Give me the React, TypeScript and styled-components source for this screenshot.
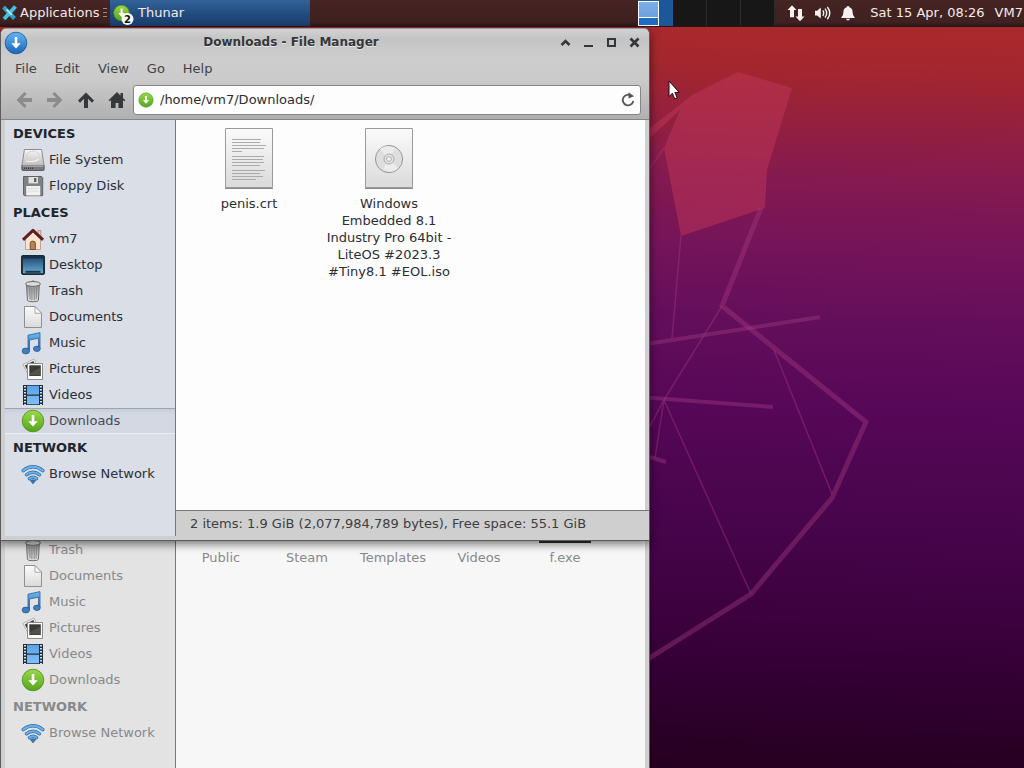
import React from "react";
import styled, { createGlobalStyle, css } from "styled-components";

const GlobalStyle = createGlobalStyle`
  *, *::before, *::after { box-sizing: border-box; }
  body {
    margin: 0;
    font-family: "DejaVu Sans", "Noto Sans", sans-serif;
    font-size: 13px;
    line-height: 17px;
    color: #2b2e33;
  }
  button, input {
    font: inherit;
    color: inherit;
    background: none;
    border: 0;
    padding: 0;
    margin: 0;
    outline: none;
  }
`;

const Screen = styled.div`
  position: relative;
  display: flex;
  flex-direction: column;
  min-height: 100vh;
  overflow: hidden;
  background: #300030;
`;

/* ---------- top panel ---------- */

const Panel = styled.header`
  position: relative;
  display: flex;
  align-items: stretch;
  height: 27px;
  background: linear-gradient(#452423, #3f2120 85%, #2c1a1a);
  color: #f3ecea;
  border-bottom: 1px solid #2a1616;
  white-space: nowrap;
`;

const AppMenu = styled.button`
  display: flex;
  align-items: center;
  gap: 3px;
  width: 103px;
  padding: 0 0 2px 2px;
`;

const Handle = styled.span`
  width: 4px;
  height: 10px;
  margin: 8px 3px 0 0;
  background: repeating-linear-gradient(#9a8a88 0 1px, transparent 1px 4px);
`;

const Task = styled.button`
  display: flex;
  align-items: center;
  gap: 3px;
  flex: 0 1 200px;
  padding: 0 0 2px 2px;
  background: linear-gradient(#336299, #20497b 60%, #1a3f6d);
`;

const Spacer = styled.div`
  flex: 1;
`;

const Pager = styled.div`
  display: flex;
  flex: none;
  width: 137px;
`;

const Workspace = styled.button<{ $active?: boolean }>`
  flex: 1;
  display: flex;
  background: ${(p) => (p.$active ? "#1c5799" : "#161716")};
  border-right: 1px solid ${(p) => (p.$active ? "#1c5799" : "#2a2a2a")};
`;

const MiniWindows = styled.span`
  width: 21px;
  height: 25px;
  margin-top: 1px;
  border: 1px solid #fff;
  background: linear-gradient(#7fb0e6, #6ba1dd 15px, #fff 15px, #fff 16px, #1f6dc2 16px);
`;

const Tray = styled.div`
  display: flex;
  align-items: center;
  gap: 8px;
  padding: 0 14px 0 11px;
  svg { display: block; }
`;

const PanelText = styled.span`
  align-self: center;
  padding: 0 10px 2px 0;
`;

const UserText = styled(PanelText)`
  padding-right: 1px;
`;

/* ---------- desktop and windows ---------- */

const Desktop = styled.main`
  position: relative;
  flex: 1;
`;

const Wallpaper = styled.svg`
  position: absolute;
  inset: 0;
  width: 100%;
  height: 100%;
`;

const Pointer = styled.svg`
  position: absolute;
  left: 668px;
  top: 80px;
`;

const windowFrame = css`
  position: absolute;
  left: 0;
  display: flex;
  flex-direction: column;
  width: 650px;
  max-width: 100%;
  background: #cfcfcf;
  border: 1px solid #5c5c5e;
  border-top-color: #9b9b9b;
`;

const Window = styled.section`
  ${windowFrame}
  top: 1px;
  border-radius: 6px 6px 0 0;
  padding-bottom: 4px;
  box-shadow: 0 3px 10px rgba(0, 0, 0, 0.55);
`;

const BackWindow = styled.section`
  ${windowFrame}
  top: 509px;
  bottom: 0;
  border-bottom: 0;
  box-shadow: 0 0 4px rgba(0, 0, 0, 0.5);
`;

const Chrome = styled.div`
  background: linear-gradient(#d3d3d3, #c4c4c4 10px, #cdcdcd 30px, #cbcbcb 50px, #b0b0b0);
  border-bottom: 1px solid #858585;
  border-radius: 5px 5px 0 0;
`;

const TitleBar = styled.div`
  display: flex;
  align-items: center;
  height: 27px;
  padding: 0 3px;
`;

const Title = styled.h1`
  flex: 1;
  margin: 0;
  font-size: 12px;
  line-height: 17px;
  font-weight: bold;
  text-align: center;
  color: #33363a;
  text-shadow: 0 1px 0 #e6e6e6;
`;

const FrameButton = styled.button`
  display: flex;
  align-items: center;
  justify-content: center;
  width: 23px;
  height: 23px;
`;

const MenuBar = styled.nav`
  display: flex;
  align-items: center;
  height: 25px;
  padding-left: 4px;
`;

const MenuItem = styled.button`
  padding: 0 8px 1px 10px;
  color: #404347;
`;

const ToolBar = styled.div`
  display: flex;
  align-items: center;
  height: 38px;
  padding: 0 8px 0 7px;
`;

const ToolButton = styled.button`
  display: flex;
  align-items: center;
  justify-content: center;
  flex: none;
  width: 31px;
  height: 30px;
`;

const PathEntry = styled.label`
  display: flex;
  align-items: center;
  flex: 1;
  gap: 6px;
  height: 30px;
  margin-left: 1px;
  padding: 0 3px 0 4px;
  background: #fdfdfd;
  border: 1px solid #858585;
  border-radius: 3px;
  input { flex: 1; min-width: 0; height: 20px; padding-bottom: 2px; }
  button { display: flex; }
`;

const Body = styled.div`
  display: flex;
  flex: 1;
  margin: 0 4px;
`;

const SideBar = styled.aside<{ $dim?: boolean }>`
  flex: none;
  width: 171px;
  background: ${(p) => (p.$dim ? "#e3e3e3" : "#dadee6")};
  color: ${(p) => (p.$dim ? "#88898b" : "#2b2f38")};
  border-right: 1px solid #77777a;
`;

const SideHeading = styled.h2<{ $dim?: boolean }>`
  margin: 0;
  padding: 5px 0 5px 8px;
  font-size: 13px;
  line-height: 17px;
  font-weight: bold;
  color: ${(p) => (p.$dim ? "#88898b" : "#20242b")};
`;

const Place = styled.button<{ $selected?: boolean }>`
  display: flex;
  align-items: center;
  gap: 4px;
  width: 100%;
  height: 26px;
  padding-left: 16px;
  text-align: left;
  span { padding-bottom: 2px; }
  ${(p) =>
    p.$selected &&
    css`
      color: #454a57;
      background: linear-gradient(#c6ccd8, #d3d8e2 6px, #d3d8e2);
      box-shadow: inset 0 1px 0 #9fa5b0, inset 0 -1px 0 #eceff4;
    `}
`;

const Pane = styled.div`
  display: flex;
  flex-direction: column;
  flex: 1;
  min-width: 0;
`;

const Files = styled.div`
  display: flex;
  align-items: flex-start;
  min-height: 390px;
  padding: 8px 3px;
  background: #fdfdfd;
`;

const FileItem = styled.button`
  display: flex;
  flex-direction: column;
  align-items: center;
  gap: 6px;
  width: 140px;
  padding: 0 6px;
  svg { display: block; }
`;

const Status = styled.div`
  padding: 4px 0 4px 14px;
  border-top: 1px solid #77777a;
  color: #3b3e42;
  margin-right: -4px;
`;

const BackFiles = styled.div`
  display: flex;
  align-items: flex-start;
  flex: 1;
  padding-left: 2px;
  background: #f7f7f7;
  color: #88898b;
`;

const BackFile = styled.button<{ $icon?: boolean }>`
  width: 86px;
  &::before {
    content: "";
    display: block;
    width: 52px;
    height: 6px;
    margin: 0 auto 6px;
    background: ${(p) => (p.$icon ? "#2e2e30" : "transparent")};
  }
`;

/* ---------- icons ---------- */

const Gradients = styled.svg`
  position: absolute;
  width: 0;
  height: 0;
`;

const stops: Record<string, [string, string]> = {
  green: ["#9bd84a", "#55a51d"],
  blue: ["#64b5f3", "#1c66b8"],
  metal: ["#f7f7f7", "#bdbdbd"],
  paper: ["#fbfbfb", "#dadada"],
  screen: ["#1d4c73", "#6ba9cf"],
  can: ["#8d8d8d", "#e9e9e9"],
  sky: ["#6fb6ee", "#2a6db0"],
  film: ["#5aa2e4", "#7fc0f5"],
};

function SharedGradients() {
  return (
    <Gradients aria-hidden="true">
      <defs>
        {Object.entries(stops).map(([id, [a, b]]) => (
          <linearGradient key={id} id={id} x1="0" y1="0" x2="0" y2="1">
            <stop offset="0" stopColor={a} />
            <stop offset="1" stopColor={b} />
          </linearGradient>
        ))}
      </defs>
    </Gradients>
  );
}

function DownloadDisc({ size, color = "green" }: { size: number; color?: "green" | "blue" }) {
  const edge = color === "green" ? "#4b8f1e" : "#1b5596";
  return (
    <svg width={size} height={size} viewBox="0 0 24 24" aria-hidden="true">
      <circle cx="12" cy="12" r="10.8" fill={`url(#${color})`} stroke={edge} strokeWidth="0.8" />
      <path d="M10.7 6h2.6v6.2h3.4L12 17.6 7.3 12.2h3.4z" fill="#fff" />
    </svg>
  );
}

const drawings: Record<string, React.ReactNode> = {
  drive: (
    <>
      <path d="M3.4 1.5h17.2l2.4 16H1z" fill="url(#metal)" stroke="#8d8d8d" />
      <ellipse cx="12" cy="8.5" rx="6.5" ry="5.5" fill="none" stroke="#d2d2d2" />
      <path d="M5 13c3 1 9 1 13-2" fill="none" stroke="#fff" />
      <path d="M.8 17.5h22.4v3.7q0 1.3-1.3 1.3H2.1q-1.3 0-1.3-1.3z" fill="#77797a" stroke="#4c4c4c" strokeWidth=".8" />
      <path d="M3 20.2h9" stroke="#3a3a3a" strokeWidth="1.6" strokeDasharray="1 1" />
      <path d="M1.5 18h21" stroke="#c9c9c9" />
    </>
  ),
  floppy: (
    <>
      <path d="M2.500 2.500h18.200l1 1v18.200H3.400l-.9-1z" fill="#7e8285" stroke="#5f6366" />
      <path d="M7.500 3h9.500v6.400H7.500z" fill="#e1e2e2" />
      <path d="M13 4h2.400v4H13z" fill="#5f6366" />
      <path d="M5.200 12h14v9.500h-14z" fill="#f1f1f1" />
      <path d="M7 14.500h10.500M7 17h10.500" stroke="#dcdcdc" />
    </>
  ),
  home: (
    <>
      <path d="M17 3.5h2.8V10L17 7z" fill="#f3d3bd" stroke="#9b7a68" strokeWidth=".7" />
      <path d="M4.5 11.5 12 4.7l7.5 6.8v11h-15z" fill="#fbe3d2" stroke="#b9927c" strokeWidth=".8" />
      <path d="M9.2 22.5v-6.2q0-2.200 2.600-2.200t2.600 2.200v6.200z" fill="#b9824e" stroke="#6d4a2b" strokeWidth=".9" />
      <path d="M2 12.800 12 3.400 22 12.800" fill="none" stroke="#5c2020" strokeWidth="3" strokeLinejoin="round" />
    </>
  ),
  desktop: (
    <>
      <rect x=".6" y="2.6" width="22.8" height="18.8" rx="1" fill="#26333d" stroke="#10202b" />
      <rect x="2" y="4.2" width="20" height="16" fill="url(#screen)" />
      <path d="M4.500 17.800h15v2h-15z" fill="#173a53" />
      <path d="M2 4.600h20" stroke="#123049" strokeWidth="1.400" />
    </>
  ),
  trash: (
    <>
      <path d="M5.5 6h12.800l-.9 15.300q-.2 1.400-5.500 1.400t-5.500-1.400z" fill="url(#can)" stroke="#6e6e6e" />
      <path d="M8.600 8.500l.4 12M10.900 8.500v12.800M13.200 8.500v12.800M15.500 8.500l-.4 12" stroke="#858585" strokeWidth="1" />
      <ellipse cx="12" cy="4.900" rx="7.400" ry="2.400" fill="#dcdcdc" stroke="#6e6e6e" />
      <path d="M9.800 3q2.200-2.400 4.400 0" fill="none" stroke="#6e6e6e" />
    </>
  ),
  document: (
    <>
      <path d="M3.5 1.5H14l6.5 6.700v14.300h-17z" fill="url(#paper)" stroke="#8f8f8f" />
      <path d="M14 1.5v6.700h6.500z" fill="#fff" stroke="#9d9d9d" strokeWidth=".9" />
    </>
  ),
  music: (
    <>
      <path d="M7 4.200 19 1.600v15.800h-1.500V7.200L8.500 9v11H7z" fill="url(#sky)" stroke="#2c62a0" strokeWidth=".8" />
      <ellipse cx="4.800" cy="20" rx="3.700" ry="2.900" fill="#3f7fc0" stroke="#275a92" strokeWidth=".8" />
      <ellipse cx="15.900" cy="17.800" rx="3.400" ry="2.700" fill="#3f7fc0" stroke="#275a92" strokeWidth=".8" />
    </>
  ),
  pictures: (
    <>
      <path d="M1.800 7.500 13 2l5 9.500-11 5.500z" fill="#f0f0ee" stroke="#a2a29c" strokeWidth=".8" />
      <path d="M3.800 8.400 12.300 4l3.600 7-8.500 4.200z" fill="#3c3e39" />
      <path d="M6.500 6.500h15v16h-15z" fill="#fcfcfc" stroke="#8c8c88" />
      <path d="M8.300 8.300h11.500v10.700H8.300z" fill="#3a3b36" />
      <path d="M9 16 19 11v7.200H9z" fill="#50524b" />
    </>
  ),
  video: (
    <>
      <path d="M2 2h20v20H2z" fill="#1f2f40" />
      <path d="M6 2.800h12v8.600H6zM6 12.700h12v8.500H6z" fill="url(#film)" />
      <path d="M4 3v19M20 3v19" stroke="#eef3f8" strokeWidth="1.800" strokeDasharray="1.600 1.400" />
    </>
  ),
  network: (
    <>
      <g fill="none" stroke="#2c6dab" strokeWidth="3.400" strokeLinecap="round">
        <path d="M2.200 8.600q9.800-7.600 19.600 0" />
        <path d="M5.400 12.800q6.600-5.200 13.200 0" />
        <path d="M8.400 16.600q3.600-2.800 7.200 0" />
      </g>
      <g fill="none" stroke="#6db1e6" strokeWidth="2" strokeLinecap="round">
        <path d="M2.200 8.600q9.800-7.600 19.600 0" />
        <path d="M5.400 12.800q6.600-5.200 13.200 0" />
        <path d="M8.400 16.600q3.600-2.800 7.200 0" />
      </g>
      <path d="M9.400 18.600q2.600-1.600 5.200 0L12 21.800z" fill="#3a76b0" stroke="#275a92" strokeWidth=".8" />
    </>
  ),
};

function PlaceIcon({ name }: { name: string }) {
  if (name === "download") return <DownloadDisc size={24} />;
  return (
    <svg width="24" height="24" viewBox="0 0 24 24" aria-hidden="true">
      {drawings[name]}
    </svg>
  );
}

function Sheet({ children }: { children: React.ReactNode }) {
  return (
    <svg width="48" height="61" viewBox="0 0 48 61" aria-hidden="true">
      <path d="M0 60.5h48" stroke="#8a8a8a" />
      <path d="M.5.5h47v59H.5z" fill="url(#paper)" stroke="#9a9a9a" />
      {children}
    </svg>
  );
}

const textLines = [29, 28, 34, 32, 10, 0, 32, 31, 32, 28, 0, 33, 28, 31, 24];

function TextFileIcon() {
  let y = 8.5;
  return (
    <Sheet>
      {textLines.map((w, i) => {
        y += w ? 3 : 2;
        return w ? <path key={i} d={`M7 ${y}h${w}`} stroke="#a3a3a3" strokeWidth=".9" /> : null;
      })}
    </Sheet>
  );
}

function DiscFileIcon() {
  return (
    <Sheet>
      <circle cx="24" cy="31" r="13.600" fill="#dedede" stroke="#8f8f8f" strokeWidth=".9" />
      <path d="M24 31 15 21q8-6 15 0zM24 31l9 9q-7 7-15 1z" fill="#ececec" />
      <circle cx="24" cy="31" r="5" fill="#e4e4e4" stroke="#9d9d9d" strokeWidth=".8" />
      <circle cx="24" cy="31" r="2.400" fill="#f4f4f4" stroke="#9d9d9d" strokeWidth=".8" />
    </Sheet>
  );
}

const frameButtons = [
  { label: "Shade", path: <path d="M2.500 9 6.500 5 10.500 9" fill="none" strokeWidth="2.600" /> },
  { label: "Minimize", path: <path d="M2 10h9" strokeWidth="2" /> },
  { label: "Maximize", path: <path d="M3 3h7v7H3z" fill="none" strokeWidth="2" /> },
  { label: "Close", path: <path d="M2.500 2.500l8 8M10.500 2.500l-8 8" strokeWidth="2.600" /> },
];

const arrow = "M0-7.500 8 .5 6 2.700 2-1.300V8h-4v-9.300L-6 2.700-8 .5z";

const toolButtons = [
  { label: "Back", shape: <path d={arrow} transform="translate(9 9) rotate(-90)" fill="#8b8b8b" /> },
  { label: "Forward", shape: <path d={arrow} transform="translate(9 9) rotate(90)" fill="#8b8b8b" /> },
  { label: "Up", shape: <path d={arrow} transform="translate(9 9)" fill="#36393c" /> },
  {
    label: "Home",
    shape: (
      <path d="M9 1 .6 9.200l1 1.100L3 9.200V17h4.600v-5h2.800v5H15V9.200l1.400 1.100 1-1.100L15 6.900V2h-2.500v2.400z" fill="#36393c" />
    ),
  },
];

/* ---------- data ---------- */

const places: [string, string][] = [
  ["home", "vm7"],
  ["desktop", "Desktop"],
  ["trash", "Trash"],
  ["document", "Documents"],
  ["music", "Music"],
  ["pictures", "Pictures"],
  ["video", "Videos"],
  ["download", "Downloads"],
];

const groups: [string, [string, string][]][] = [
  ["DEVICES", [["drive", "File System"], ["floppy", "Floppy Disk"]]],
  ["PLACES", places],
  ["NETWORK", [["network", "Browse Network"]]],
];

const backGroups: [string, [string, string][]][] = [
  ["", places.slice(2)],
  ["NETWORK", [["network", "Browse Network"]]],
];

const backFiles = ["Public", "Steam", "Templates", "Videos", "f.exe"];

function Places({ data, dim, selected }: { data: typeof groups; dim?: boolean; selected?: string }) {
  return (
    <SideBar $dim={dim}>
      {data.map(([heading, items]) => (
        <React.Fragment key={heading}>
          {heading && <SideHeading $dim={dim}>{heading}</SideHeading>}
          {items.map(([icon, label]) => (
            <Place key={label} $selected={label === selected}>
              <PlaceIcon name={icon} />
              <span>{label}</span>
            </Place>
          ))}
        </React.Fragment>
      ))}
    </SideBar>
  );
}

function TopPanel() {
  return (
    <Panel>
      <AppMenu>
        <svg width="15" height="17" viewBox="0 0 15 17" aria-hidden="true">
          <path d="M1.500 3 12.500 14.500" stroke="#2f9fc4" strokeWidth="4" />
          <path d="M13.500 2.500 2 15" stroke="#3fc3e0" strokeWidth="4" />
          <path d="M4.500 5.500 10 11" stroke="#c9eef7" strokeWidth="1.600" />
        </svg>
        Applications
      </AppMenu>
      <Handle />
      <Task>
        <svg width="23" height="25" viewBox="0 0 23 25" aria-hidden="true">
          <circle cx="9.500" cy="13" r="7.800" fill="url(#green)" stroke="#4b8f1e" strokeWidth=".8" />
          <path d="M8.600 8.500h2v4.600h2.400l-3.400 4-3.400-4h2.400z" fill="#fff" />
          <circle cx="15.500" cy="19" r="6" fill="#fff" />
          <text x="15.500" y="22.500" fontSize="10" fontWeight="bold" textAnchor="middle" fill="#111">2</text>
        </svg>
        Thunar
      </Task>
      <Spacer />
      <Pager>
        <Workspace $active aria-label="Workspace 1">
          <MiniWindows />
        </Workspace>
        <Workspace aria-label="Workspace 2" />
        <Workspace aria-label="Workspace 3" />
        <Workspace aria-label="Workspace 4" />
      </Pager>
      <Tray>
        <svg width="20" height="18" viewBox="0 0 20 18" fill="#f6f1ef" aria-label="Network">
          <path d="M6 1.200 10.500 6H8v7.200H4V6H1.500zM14 17.200 9.500 12.400H12V5h4v7.400h2.500z" />
        </svg>
        <svg width="18" height="18" viewBox="0 0 18 18" fill="#f6f1ef" aria-label="Volume">
          <path d="M1 6.800h2.200l3.600-3.200v11L3.200 11.400H1z" />
          <path d="M8.800 6.400q1.800 2.700 0 5.400M11 4.600q3.400 4.500 0 9M13.300 3q5 6 0 12.200" fill="none" stroke="#f6f1ef" strokeWidth="1.400" />
        </svg>
        <svg width="16" height="18" viewBox="0 0 16 18" fill="#f6f1ef" aria-label="Notifications">
          <path d="M8 2q1.200 0 1.400 1.200 3.200 1 3.200 4.800 0 3.600 2 5.200v.8H1.400v-.8q2-1.600 2-5.200 0-3.800 3.200-4.800Q6.800 2 8 2zM6 14.800h4q-.4 1.800-2 1.800t-2-1.800z" />
        </svg>
      </Tray>
      <PanelText>Sat 15 Apr, 08:26</PanelText>
      <UserText>VM7</UserText>
    </Panel>
  );
}

function Backdrop() {
  return (
    <Wallpaper viewBox="0 27 1024 741" preserveAspectRatio="xMidYMid slice" aria-hidden="true">
      <defs>
        <linearGradient id="dusk" gradientUnits="userSpaceOnUse" x1="850" y1="27" x2="830" y2="768">
          <stop offset="0" stopColor="#aa292c" />
          <stop offset=".06" stopColor="#a3262f" />
          <stop offset=".13" stopColor="#93203f" />
          <stop offset=".2" stopColor="#851a4e" />
          <stop offset=".3" stopColor="#741459" />
          <stop offset=".4" stopColor="#630e5b" />
          <stop offset=".52" stopColor="#560757" />
          <stop offset=".66" stopColor="#48054c" />
          <stop offset=".8" stopColor="#3c013e" />
          <stop offset=".9" stopColor="#300030" />
          <stop offset="1" stopColor="#260020" />
        </linearGradient>
      </defs>
      <path d="M0 27h1024v741H0z" fill="url(#dusk)" />
      <path d="M738 72 792 88 767 170 765 208 681 236 664 148 680 110 650 138V128L692 95z" fill="#bf3558" fillOpacity=".5" />
      <g fill="none" stroke="#a23a80" strokeOpacity=".42">
        <path d="M761 208 722 306 866 422 832 498 751 594 640 664" strokeWidth="5" />
        <path d="M640 345 820 317M640 397 773 407M650 457 666 462" strokeWidth="4" />
        <path d="M681 236 672 338M722 306 664 400 636 452M664 400 655 458M664 400 751 594M774 350 832 494M664 148 650 168" strokeWidth="1.500" />
      </g>
    </Wallpaper>
  );
}

export default function App() {
  return (
    <Screen>
      <GlobalStyle />
      <SharedGradients />
      <TopPanel />
      <Desktop>
        <Backdrop />
        <BackWindow aria-label="Home folder">
          <Body>
            <Places data={backGroups} dim />
            <BackFiles>
              {backFiles.map((name) => (
                <BackFile key={name} $icon={name === "f.exe"}>
                  {name}
                </BackFile>
              ))}
            </BackFiles>
          </Body>
        </BackWindow>
        <Window>
          <Chrome>
            <TitleBar>
              <DownloadDisc size={24} color="blue" />
              <Title>Downloads - File Manager</Title>
              {frameButtons.map((b) => (
                <FrameButton key={b.label} aria-label={b.label}>
                  <svg width="13" height="13" viewBox="0 0 13 13" stroke="#34373a" aria-hidden="true">
                    {b.path}
                  </svg>
                </FrameButton>
              ))}
            </TitleBar>
            <MenuBar>
              {["File", "Edit", "View", "Go", "Help"].map((m) => (
                <MenuItem key={m}>{m}</MenuItem>
              ))}
            </MenuBar>
            <ToolBar>
              {toolButtons.map((b) => (
                <ToolButton key={b.label} aria-label={b.label}>
                  <svg width="18" height="18" viewBox="0 0 18 18" aria-hidden="true">
                    {b.shape}
                  </svg>
                </ToolButton>
              ))}
              <PathEntry>
                <DownloadDisc size={16} />
                <input aria-label="Location" defaultValue="/home/vm7/Downloads/" />
                <button aria-label="Reload">
                  <svg width="18" height="18" viewBox="0 0 18 18" aria-hidden="true">
                    <path d="M12.500 5A5.300 5.300 0 1 0 14.300 9.800" fill="none" stroke="#55585a" strokeWidth="1.800" />
                    <path d="M9.500 1.200 15 5.200 9.500 7.400z" fill="#55585a" />
                  </svg>
                </button>
              </PathEntry>
            </ToolBar>
          </Chrome>
          <Body>
            <Places data={groups} selected="Downloads" />
            <Pane>
              <Files>
                <FileItem>
                  <TextFileIcon />
                  penis.crt
                </FileItem>
                <FileItem>
                  <DiscFileIcon />
                  Windows Embedded 8.1 Industry Pro 64bit - LiteOS #2023.3 #Tiny8.1 #EOL.iso
                </FileItem>
              </Files>
              <Status>2 items: 1.9 GiB (2,077,984,789 bytes), Free space: 55.1 GiB</Status>
            </Pane>
          </Body>
        </Window>
      </Desktop>
      <Pointer width="12" height="21" viewBox="0 0 12 21" aria-hidden="true">
        <path d="M1 1v15.500l3.400-3.200 2.300 5.500 2.500-1-2.300-5.400h4.300z" fill="#fff" stroke="#1d0a10" strokeWidth="1" />
      </Pointer>
    </Screen>
  );
}
